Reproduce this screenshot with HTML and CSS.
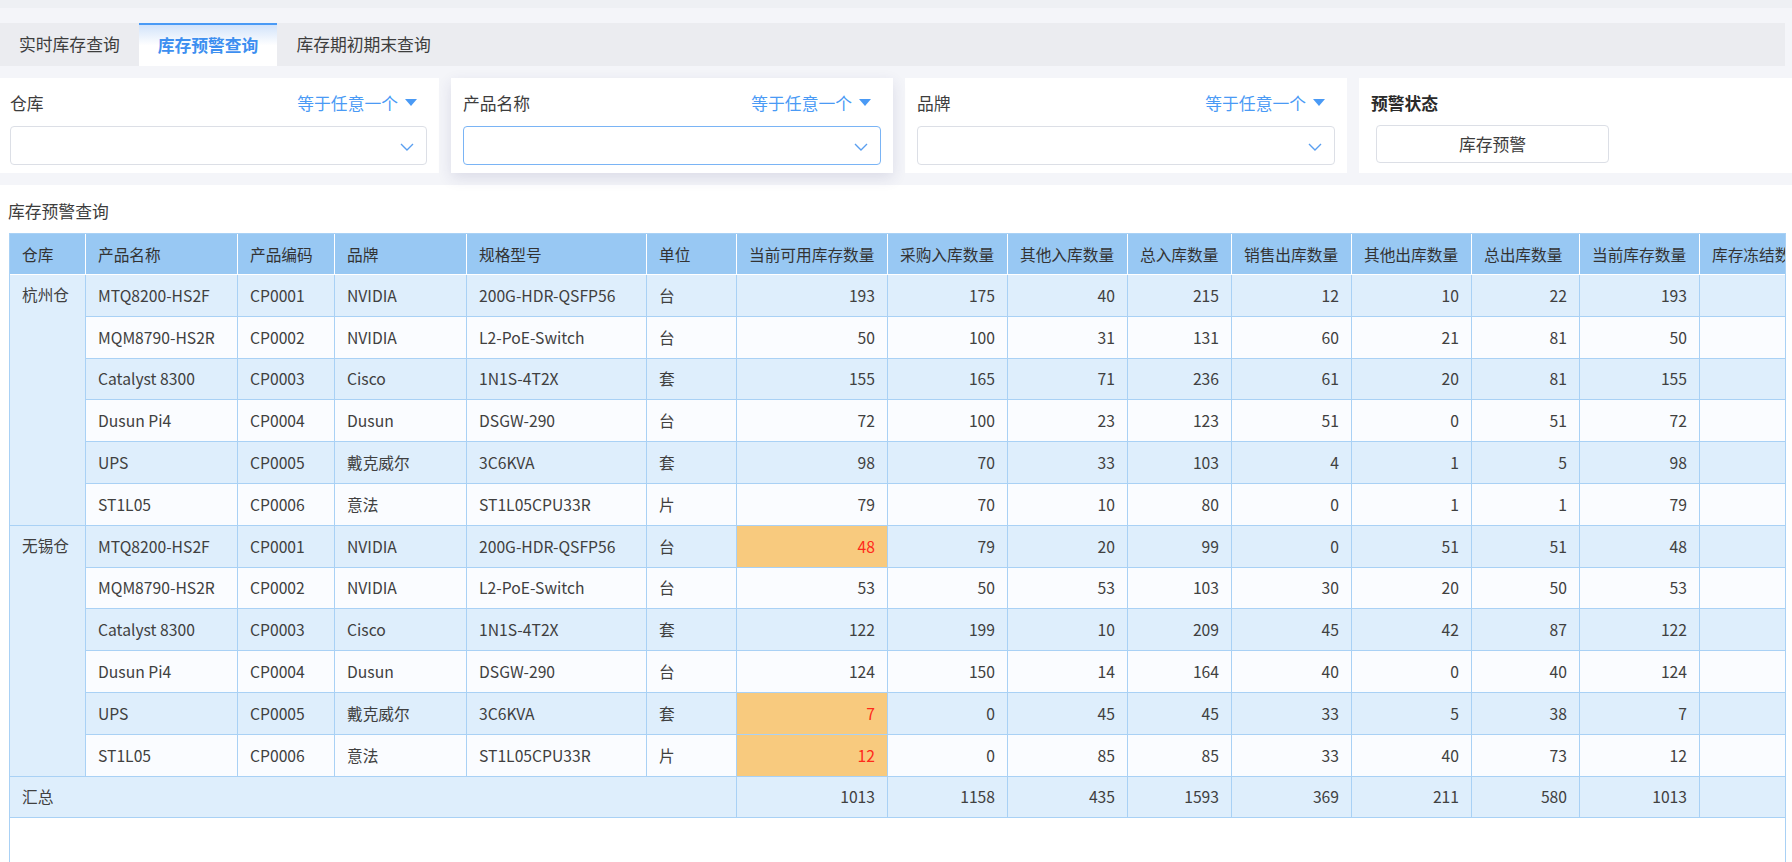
FILE: index.html
```html
<!DOCTYPE html>
<html lang="zh-CN">
<head>
<meta charset="utf-8">
<title>库存预警查询</title>
<link rel="stylesheet" href="styles.css">
</head>
<body>
<div class="page">
  <div class="topstrip"></div>
  <div class="tabs">
    <div class="tab">实时库存查询</div>
    <div class="tab active">库存预警查询</div>
    <div class="tab">库存期初期末查询</div>
  </div>

  <div class="filters">
    <div class="card">
      <div class="card-head">
        <span class="label">仓库</span>
        <span class="op">等于任意一个<i class="tri"></i></span>
      </div>
      <div class="select">
        <svg class="chev" width="14" height="8" viewBox="0 0 14 8"><polyline points="1,1 7,7 13,1" fill="none" stroke="#5a9ff0" stroke-width="1.4"/></svg>
      </div>
    </div>
    <div class="card focus">
      <div class="card-head">
        <span class="label">产品名称</span>
        <span class="op">等于任意一个<i class="tri"></i></span>
      </div>
      <div class="select active">
        <svg class="chev" width="14" height="8" viewBox="0 0 14 8"><polyline points="1,1 7,7 13,1" fill="none" stroke="#5a9ff0" stroke-width="1.4"/></svg>
      </div>
    </div>
    <div class="card">
      <div class="card-head">
        <span class="label">品牌</span>
        <span class="op">等于任意一个<i class="tri"></i></span>
      </div>
      <div class="select">
        <svg class="chev" width="14" height="8" viewBox="0 0 14 8"><polyline points="1,1 7,7 13,1" fill="none" stroke="#5a9ff0" stroke-width="1.4"/></svg>
      </div>
    </div>
    <div class="card status">
      <div class="card-head">
        <span class="label strong">预警状态</span>
      </div>
      <div class="btn">库存预警</div>
    </div>
  </div>

  <div class="section">
    <div class="section-title">库存预警查询</div>
    <div class="table-wrap">
      <table class="grid">
        <colgroup>
          <col class="c-wh"><col class="c-name"><col class="c-code"><col class="c-brand"><col class="c-spec"><col class="c-unit">
          <col class="c-avail"><col class="c-n120"><col class="c-n120"><col class="c-n104"><col class="c-n120"><col class="c-n120"><col class="c-n108"><col class="c-n120"><col class="c-n120">
        </colgroup>
        <thead>
          <tr>
            <th>仓库</th><th>产品名称</th><th>产品编码</th><th>品牌</th><th>规格型号</th><th>单位</th>
            <th>当前可用库存数量</th><th>采购入库数量</th><th>其他入库数量</th><th>总入库数量</th><th>销售出库数量</th><th>其他出库数量</th><th>总出库数量</th><th>当前库存数量</th><th>库存冻结数量</th>
          </tr>
        </thead>
        <tbody>
          <tr class="odd">
            <td rowspan="6" class="wh">杭州仓</td>
            <td>MTQ8200-HS2F</td><td>CP0001</td><td>NVIDIA</td><td>200G-HDR-QSFP56</td><td>台</td>
            <td class="n">193</td><td class="n">175</td><td class="n">40</td><td class="n">215</td><td class="n">12</td><td class="n">10</td><td class="n">22</td><td class="n">193</td><td></td>
          </tr>
          <tr class="even">
            <td>MQM8790-HS2R</td><td>CP0002</td><td>NVIDIA</td><td>L2-PoE-Switch</td><td>台</td>
            <td class="n">50</td><td class="n">100</td><td class="n">31</td><td class="n">131</td><td class="n">60</td><td class="n">21</td><td class="n">81</td><td class="n">50</td><td></td>
          </tr>
          <tr class="odd">
            <td>Catalyst 8300</td><td>CP0003</td><td>Cisco</td><td>1N1S-4T2X</td><td>套</td>
            <td class="n">155</td><td class="n">165</td><td class="n">71</td><td class="n">236</td><td class="n">61</td><td class="n">20</td><td class="n">81</td><td class="n">155</td><td></td>
          </tr>
          <tr class="even">
            <td>Dusun Pi4</td><td>CP0004</td><td>Dusun</td><td>DSGW-290</td><td>台</td>
            <td class="n">72</td><td class="n">100</td><td class="n">23</td><td class="n">123</td><td class="n">51</td><td class="n">0</td><td class="n">51</td><td class="n">72</td><td></td>
          </tr>
          <tr class="odd">
            <td>UPS</td><td>CP0005</td><td>戴克威尔</td><td>3C6KVA</td><td>套</td>
            <td class="n">98</td><td class="n">70</td><td class="n">33</td><td class="n">103</td><td class="n">4</td><td class="n">1</td><td class="n">5</td><td class="n">98</td><td></td>
          </tr>
          <tr class="even">
            <td>ST1L05</td><td>CP0006</td><td>意法</td><td>ST1L05CPU33R</td><td>片</td>
            <td class="n">79</td><td class="n">70</td><td class="n">10</td><td class="n">80</td><td class="n">0</td><td class="n">1</td><td class="n">1</td><td class="n">79</td><td></td>
          </tr>
          <tr class="odd">
            <td rowspan="6" class="wh">无锡仓</td>
            <td>MTQ8200-HS2F</td><td>CP0001</td><td>NVIDIA</td><td>200G-HDR-QSFP56</td><td>台</td>
            <td class="n warn">48</td><td class="n">79</td><td class="n">20</td><td class="n">99</td><td class="n">0</td><td class="n">51</td><td class="n">51</td><td class="n">48</td><td></td>
          </tr>
          <tr class="even">
            <td>MQM8790-HS2R</td><td>CP0002</td><td>NVIDIA</td><td>L2-PoE-Switch</td><td>台</td>
            <td class="n">53</td><td class="n">50</td><td class="n">53</td><td class="n">103</td><td class="n">30</td><td class="n">20</td><td class="n">50</td><td class="n">53</td><td></td>
          </tr>
          <tr class="odd">
            <td>Catalyst 8300</td><td>CP0003</td><td>Cisco</td><td>1N1S-4T2X</td><td>套</td>
            <td class="n">122</td><td class="n">199</td><td class="n">10</td><td class="n">209</td><td class="n">45</td><td class="n">42</td><td class="n">87</td><td class="n">122</td><td></td>
          </tr>
          <tr class="even">
            <td>Dusun Pi4</td><td>CP0004</td><td>Dusun</td><td>DSGW-290</td><td>台</td>
            <td class="n">124</td><td class="n">150</td><td class="n">14</td><td class="n">164</td><td class="n">40</td><td class="n">0</td><td class="n">40</td><td class="n">124</td><td></td>
          </tr>
          <tr class="odd">
            <td>UPS</td><td>CP0005</td><td>戴克威尔</td><td>3C6KVA</td><td>套</td>
            <td class="n warn">7</td><td class="n">0</td><td class="n">45</td><td class="n">45</td><td class="n">33</td><td class="n">5</td><td class="n">38</td><td class="n">7</td><td></td>
          </tr>
          <tr class="even">
            <td>ST1L05</td><td>CP0006</td><td>意法</td><td>ST1L05CPU33R</td><td>片</td>
            <td class="n warn">12</td><td class="n">0</td><td class="n">85</td><td class="n">85</td><td class="n">33</td><td class="n">40</td><td class="n">73</td><td class="n">12</td><td></td>
          </tr>
          <tr class="total">
            <td colspan="6">汇总</td>
            <td class="n">1013</td><td class="n">1158</td><td class="n">435</td><td class="n">1593</td><td class="n">369</td><td class="n">211</td><td class="n">580</td><td class="n">1013</td><td></td>
          </tr>
        </tbody>
      </table>
    </div>
  </div>
</div>
</body>
</html>
```

FILE: styles.css
```css
html, body {
  margin: 0;
  padding: 0;
  height: 862px;
  overflow: hidden;
}
body {
  background: #f4f5f9;
  font-family: "Noto Sans CJK SC", "Noto Sans", sans-serif;
  color: #3d3d3d;
}
.page {
  height: 862px;
  display: flex;
  flex-direction: column;
}
.topstrip {
  height: 8px;
  background: #eef0f4;
  flex: none;
}
.tabs {
  flex: none;
  margin-top: 15px;
  margin-right: 7px;
  height: 43px;
  background: #ebecf0;
  display: flex;
}
.tab {
  padding: 0 19px;
  font-size: 16.8px;
  line-height: 43px;
  color: #3d3d3d;
  white-space: nowrap;
}
.tab.active {
  line-height: 41px;
  border-top: 2px solid #4a9af5;
  background: linear-gradient(#d2e3fa 0%, #ffffff 50%);
  color: #3d8ff0;
  font-weight: bold;
}
.filters {
  flex: none;
  margin-top: 12px;
  margin-left: -2px;
  height: 95px;
  display: grid;
  grid-template-columns: 441px 442px 442px 1fr;
  column-gap: 12px;
}
.card {
  background: #fff;
  padding: 0 12px;
  display: flex;
  flex-direction: column;
}
.card.focus {
  box-shadow: 0 5px 14px rgba(40, 40, 110, 0.12);
  position: relative;
  z-index: 1;
}
.card-head {
  height: 48px;
  display: flex;
  align-items: center;
  justify-content: space-between;
  padding: 1px 10px 0 0;
  box-sizing: border-box;
}
.label {
  font-size: 16.8px;
  color: #3d3d3d;
}
.label.strong {
  font-weight: bold;
  color: #2a2a2a;
}
.op {
  font-size: 16.8px;
  color: #4a9af5;
  display: flex;
  align-items: center;
}
.tri {
  display: inline-block;
  width: 0;
  height: 0;
  margin-left: 7px;
  border-left: 6px solid transparent;
  border-right: 6px solid transparent;
  border-top: 7px solid #4a9af5;
}
.select {
  height: 39px;
  box-sizing: border-box;
  border: 1px solid #dcdfe6;
  border-radius: 4px;
  display: flex;
  align-items: center;
  justify-content: flex-end;
  padding-right: 12px;
}
.select.active {
  border-color: #7ab4f5;
}
.chev {
  display: block;
  margin-top: 2px;
}
.card.status {
  padding-left: 12px;
}
.btn {
  margin-left: 5px;
  width: 233px;
  height: 38px;
  box-sizing: border-box;
  border: 1px solid #dcdfe6;
  border-radius: 4px;
  background: #fff;
  font-size: 16.8px;
  color: #3d3d3d;
  display: flex;
  align-items: center;
  justify-content: center;
  margin-top: -1px;
}
.section {
  flex: 1;
  margin-top: 12px;
  background: #fff;
  display: flex;
  flex-direction: column;
  min-height: 0;
}
.section-title {
  flex: none;
  margin: 14px 0 0 8px;
  height: 24px;
  line-height: 24px;
  font-size: 16.8px;
  color: #3d3d3d;
}
.table-wrap {
  flex: 1;
  margin: 10px 6px 0 9px;
  border: 1px solid #a9d1f5;
  border-bottom: none;
  overflow: hidden;
  min-height: 0;
}
.grid {
  border-collapse: collapse;
  table-layout: fixed;
  width: 1810px;
  margin: -1px 0 0 -1px;
  font-size: 15.7px;
  color: #404040;
}
.c-wh { width: 76px; }
.c-name { width: 152px; }
.c-code { width: 97px; }
.c-brand { width: 132px; }
.c-spec { width: 180px; }
.c-unit { width: 90px; }
.c-avail { width: 151px; }
.c-n120 { width: 120px; }
.c-n104 { width: 104px; }
.c-n108 { width: 108px; }
.grid th {
  background: #98c8f3;
  border: 1px solid #ffffff;
  border-top-color: #a9d1f5;
  height: 40px;
  padding: 0 8px 0 12px;
  text-align: left;
  font-weight: normal;
  white-space: nowrap;
  overflow: hidden;
  color: #333;
}
.grid td {
  border: 1px solid #a9d1f5;
  height: 40.8px;
  padding: 0 12px;
  white-space: nowrap;
  overflow: hidden;
}
.grid tr.odd td,
.grid tr.total td {
  background: #deeefc;
}
.grid tr.even td {
  background: #fafcff;
}
.grid td.wh {
  background: #deeefc;
  vertical-align: top;
  padding-top: 9px;
  line-height: 22px;
}
.grid td.n {
  text-align: right;
}
.grid tr td.warn {
  background: #f8ca7e;
  color: #ff2a1a;
}
```
